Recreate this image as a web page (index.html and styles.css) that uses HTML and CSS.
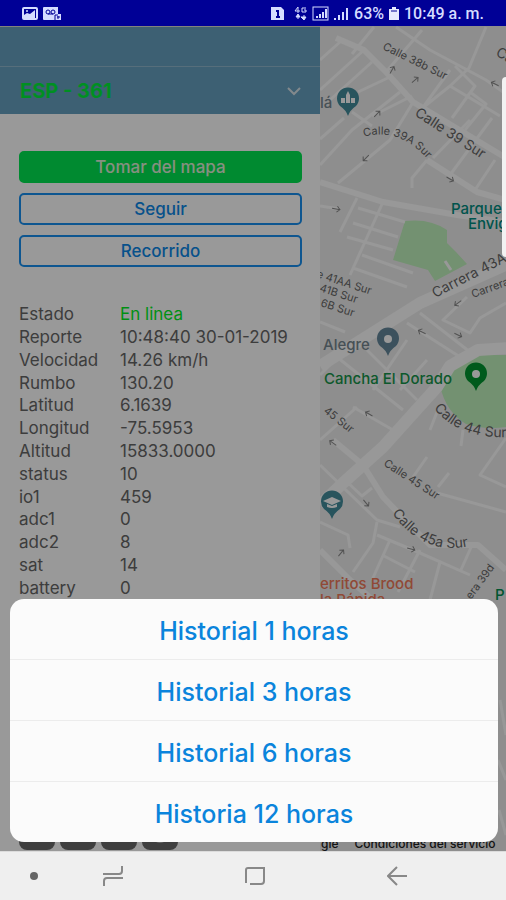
FILE: index.html
```html
<!DOCTYPE html>
<html lang="es">
<head>
  <meta charset="UTF-8">
  <meta name="viewport" content="width=device-width, initial-scale=1.0">
  <title>ESP - 361</title>
  <link rel="stylesheet" href="styles.css">
</head>
<body>

  <header class="status-bar">
    <div class="status-group">
      <svg width="16" height="13" viewBox="0 0 16 13">
        <rect x="1" y="1" width="14" height="11" rx="1" fill="none" stroke="#d5dcff" stroke-width="2"/>
        <path d="M2 11V8l3-2 3 1 5-4v8z" fill="#d5dcff"/>
        <circle cx="5" cy="4" r="1" fill="#d5dcff"/>
      </svg>
      <svg width="18" height="13" viewBox="0 0 18 13">
        <path d="M1 0h14v7h3v6H1q-1 0-1-1V1q0-1 1-1z" fill="#d5dcff"/>
        <g fill="none" stroke="#000096">
          <circle cx="5" cy="5" r="2"/><circle cx="10" cy="5" r="2"/><path d="M5 7h5M12 13V8h3M15 9v3M14 10h3"/>
        </g>
      </svg>
    </div>
    <div class="status-group status-right">
      <svg width="13" height="13" viewBox="0 0 13 13">
        <path d="M0 0h10l3 3v10H0z" fill="#d5dcff"/>
        <path d="M5 4h2v6M5 10h4" fill="none" stroke="#000096" stroke-width="2"/>
      </svg>
      <svg class="icon-4g" width="13" height="15" viewBox="0 0 13 15">
        <path d="M4 7V1L1 5h5M12 2H8v4h4V4h-2" fill="none" stroke="#d5dcff"/>
        <path d="M2 11l2-3 2 3zM7 11h5l-2 3zM4 10v3M10 9v3" fill="#d5dcff" stroke="#d5dcff"/>
      </svg>
      <svg width="17" height="15" viewBox="0 0 17 15">
        <rect x="1" y="1" width="15" height="13" fill="none" stroke="#d5dcff"/>
        <path d="M5 12v-2M8 12V8M11 12V6M14 12V3" stroke="#d5dcff" stroke-width="2"/>
      </svg>
      <svg width="15" height="13" viewBox="0 0 15 13">
        <path d="M1 13v-2M5 13V8M9 13V5M13 13V1" stroke="#d5dcff" stroke-width="2"/>
      </svg>
      <span>63%</span>
      <svg width="10" height="13" viewBox="0 0 10 13">
        <path d="M3 0h4v2h3v11H0V2h3z" fill="#e6eaff"/>
        <path d="M2 4h6" stroke="#000096"/>
      </svg>
      <span>10:49 a. m.</span>
    </div>
  </header>

  <main class="app">
    <section class="panel">
      <div class="panel-top"></div>
      <div class="panel-header">
        <h1>ESP - 361</h1>
        <button class="collapse-btn" aria-label="Cerrar">
          <svg width="16" height="10" viewBox="0 0 16 10"><path d="M2 2l6 6 6-6" fill="none" stroke="#d9e4ea" stroke-width="2"/></svg>
        </button>
      </div>

      <div class="actions">
        <button class="btn btn-fill">Tomar del mapa</button>
        <button class="btn">Seguir</button>
        <button class="btn">Recorrido</button>
      </div>

      <table class="details">
        <tr><th>Estado</th><td class="online">En linea</td></tr>
        <tr><th>Reporte</th><td>10:48:40 30-01-2019</td></tr>
        <tr><th>Velocidad</th><td>14.26 km/h</td></tr>
        <tr><th>Rumbo</th><td>130.20</td></tr>
        <tr><th>Latitud</th><td>6.1639</td></tr>
        <tr><th>Longitud</th><td>-75.5953</td></tr>
        <tr><th>Altitud</th><td>15833.0000</td></tr>
        <tr><th>status</th><td>10</td></tr>
        <tr><th>io1</th><td>459</td></tr>
        <tr><th>adc1</th><td>0</td></tr>
        <tr><th>adc2</th><td>8</td></tr>
        <tr><th>sat</th><td>14</td></tr>
        <tr><th>battery</th><td>0</td></tr>
      </table>

      <div class="tools">
        <span class="tool"></span>
        <span class="tool"></span>
        <span class="tool"></span>
        <span class="tool tool-round"></span>
      </div>
    </section>

    <section class="map">
      <svg class="map-canvas" viewBox="320 26 186 825" preserveAspectRatio="xMinYMin slice">
        <defs>
          <path id="c39a" d="M364 137Q400 126 430 162"/>
          <path id="c44" d="M434 408Q458 440 512 437"/>
          <path id="c45a" d="M392 513Q424 558 474 545"/>
          <g id="arrow"><path d="M-4 0H4M1 -3L4 0L1 3" fill="none" stroke="#888"/></g>
        </defs>

        <!-- parks -->
        <path class="park" d="M405 221Q430 218 447 230V243L456 252L467 264L435 281L428 270L393 260Z"/>
        <path class="park" d="M506 355H480Q455 360 440 386Q446 412 466 424Q484 430 506 427Z"/>

        <!-- streets -->
        <g class="street">
          <path d="M396 27L430 50L486 80L506 94M486 27L469 68L450 86L425 106M352 54L374 27M386 72L422 30M340 42L320 60M320 90L364 50M330 100L372 62M358 92L392 76M372 116L412 96M450 86L500 116M424 106L450 70"/>
          <path d="M455 66L475 86L452 118M470 92L486 104L465 130M400 92L352 130L320 165M412 104L390 140L338 183M352 112L372 126"/>
          <path d="M470 120L433 158M492 118L450 175M495 160L475 190M427 160L412 178V188M320 206L340 209M320 139L344 118"/>
          <path d="M357 198L340 232M383 202L350 275M358 208L405 222M353 223L398 237M347 237L393 250M362 255L413 273M353 268L407 287M445 261L451 270"/>
          <path d="M420 313L470 352M407 323L460 357M467 297L443 320L470 333L480 318L506 303M337 357L403 410M367 350L417 400M407 340L373 390M353 407L393 430M357 407L320 440M427 360L400 390M320 375L345 350M320 322L345 332"/>
          <path d="M437 412L430 430M463 430L461 446M320 465L377 520L400 527M377 522L373 543L353 572M377 535L420 553L470 575M390 540L372 580M420 550L398 592M473 543L460 572M437 493L506 512M506 438L480 475L506 487M427 457L413 477M449 473L438 487M384 556L415 572M440 562L430 600M320 522L348 535L350 548M345 480L362 496L372 488"/>
          <path d="M500 700L506 735M498 760L506 780M499 810L506 835"/>
        </g>
        <g class="street main">
          <path d="M336 38L364 50L386 72L413 102L506 158M320 182L383 202L457 215L506 222M427 160L477 192L506 200"/>
          <path d="M333 440L363 465L383 497L405 520L430 545L478 545L506 570M320 550L350 580L375 602"/>
        </g>
        <g class="street avenue">
          <path d="M512 262L420 303L320 366M512 348L478 350L450 366L437 387L383 447L343 483L320 505"/>
        </g>

        <use href="#arrow" transform="translate(392 70) rotate(-60)"/>
        <use href="#arrow" transform="translate(415 80) rotate(-40)"/>
        <use href="#arrow" transform="translate(377 114) rotate(-45)"/>
        <use href="#arrow" transform="translate(495 84) rotate(205)"/>
        <use href="#arrow" transform="translate(366 158) rotate(135)"/>
        <use href="#arrow" transform="translate(450 179) rotate(30)"/>
        <use href="#arrow" transform="translate(336 209) rotate(10)"/>
        <use href="#arrow" transform="translate(458 303) rotate(145)"/>
        <use href="#arrow" transform="translate(422 332) rotate(205)"/>
        <use href="#arrow" transform="translate(458 335) rotate(25)"/>
        <use href="#arrow" transform="translate(369 414) rotate(210)"/>
        <use href="#arrow" transform="translate(333 443) rotate(215)"/>
        <use href="#arrow" transform="translate(366 503) rotate(50)"/>
        <use href="#arrow" transform="translate(341 553) rotate(-50)"/>
        <use href="#arrow" transform="translate(411 549) rotate(15)"/>

        <!-- street names -->
        <g class="label small">
          <text transform="translate(382 49) rotate(26)">Calle 38b Sur</text>
          <text><textPath href="#c39a">Calle 39A Sur</textPath></text>
          <text transform="translate(316 277) rotate(18)">e 41AA Sur</text>
          <text transform="translate(319 291) rotate(18)">41B Sur</text>
          <text transform="translate(320 306) rotate(18)">6B Sur</text>
          <text transform="translate(473 298) rotate(-20)">Carrera 43</text>
          <text transform="translate(323 412) rotate(38)">45 Sur</text>
          <text transform="translate(383 465) rotate(33)">Calle 45 Sur</text>
          <text transform="translate(471 600) rotate(-54)">era 39d</text>
        </g>
        <g class="label">
          <text transform="translate(414 115) rotate(33)">Calle 39 Sur</text>
          <text transform="translate(495 55) rotate(30)">Calle</text>
          <text transform="translate(435 298) rotate(-27)">Carrera 43A</text>
          <text><textPath href="#c44">Calle 44 Sur</textPath></text>
          <text><textPath href="#c45a">Calle 45a Sur</textPath></text>
        </g>

        <!-- places -->
        <g class="place">
          <text x="320" y="108" fill="#75868f">lá</text>
          <text x="323" y="350" fill="#75868f">Alegre</text>
          <text x="451" y="214" fill="#008c80">Parque</text>
          <text x="468" y="229" fill="#008c80">Envigado</text>
          <text x="324" y="384" fill="#16944a">Cancha El Dorado</text>
          <text x="320" y="589" fill="#f07a5a">erritos Brood</text>
          <text x="320" y="605" fill="#f07a5a">la Rápida</text>
          <text x="495" y="600" fill="#008f50">P</text>
        </g>

        <g fill="#438c9c">
          <path d="M348 116Q346 110 340 106A11 11 0 1 1 356 106Q350 110 348 116Z"/>
          <path d="M332 519Q330 513 324 509A11 11 0 1 1 340 509Q334 513 332 519Z"/>
        </g>
        <path fill="#fff" d="M341 103V98h4v5zM351 103V98h4v5zM346 103v-8l2-4 2 4v8z"/>
        <path fill="#fff" d="M323 501l9-4 9 4-9 4zM327 504l5 2 5-2v3q-5 2-10 0z"/>
        <path fill="#64889c" d="M388 356Q386 350 380 346A11 11 0 1 1 396 346Q390 350 388 356Z"/>
        <path fill="#009630" d="M476 391Q474 385 468 381A11 11 0 1 1 484 381Q478 385 476 391Z"/>
        <circle cx="388" cy="339" r="4" fill="#fff"/>
        <circle cx="476" cy="374" r="4" fill="#fff"/>
      </svg>
      <p class="map-terms"><span>gle</span><a href="#">Condiciones del servicio</a></p>
    </section>

    <div class="backdrop">
      <div class="sheet">
        <button>Historial 1 horas</button>
        <button>Historial 3 horas</button>
        <button>Historial 6 horas</button>
        <button>Historia 12 horas</button>
      </div>
    </div>
    <div class="edge-handle"></div>
  </main>

  <nav class="nav-bar">
    <button class="nav-dot" aria-label="Ocultar">
      <svg width="8" height="8" viewBox="0 0 8 8"><circle cx="4" cy="4" r="4" fill="#666"/></svg>
    </button>
    <button aria-label="Recientes">
      <svg width="20" height="20" viewBox="0 0 20 20"><path d="M0 8h16q3 0 3-3V0M20 12H4q-3 0-3 3v5" fill="none" stroke="#888" stroke-width="2"/></svg>
    </button>
    <button aria-label="Inicio">
      <svg width="20" height="20" viewBox="0 0 20 20"><path d="M1 17V4q0-2 2-2h16v13q0 3-3 3H5" fill="none" stroke="#888" stroke-width="2"/></svg>
    </button>
    <button aria-label="Volver">
      <svg width="20" height="20" viewBox="0 0 20 20"><path d="M20 10H1M10 1L1 10l9 9" fill="none" stroke="#888" stroke-width="2"/></svg>
    </button>
  </nav>

</body>
</html>
```
FILE: styles.css
```css
* {
  box-sizing: border-box;
}

body {
  margin: 0;
  height: 100vh;
  display: flex;
  flex-direction: column;
  font-family: Inter, Roboto, sans-serif;
  font-size: 17px;
  background-color: #fff;
}

button {
  font-family: inherit;
  padding: 0;
  border: none;
  background: none;
  cursor: pointer;
}

svg {
  display: block;
}

.status-bar {
  height: 26px;
  flex: none;
  padding: 0 22px;
  display: flex;
  justify-content: space-between;
  align-items: center;
  background-color: #000096;
  color: #d5dcff;
  font-family: Roboto, sans-serif;
  font-size: 16px;
  font-weight: 500;
}

.status-group {
  display: flex;
  align-items: center;
  gap: 5px;
}

.status-right .icon-4g {
  margin-left: 5px;
}

.app {
  position: relative;
  flex: 1;
  min-height: 0;
  display: flex;
  overflow: hidden;
}

.panel {
  width: 320px;
  flex: none;
  display: flex;
  flex-direction: column;
  background-color: #fff;
  overflow: hidden;
}

.panel-top {
  height: 41px;
  flex: none;
  background-color: #66a0c0;
  border-top: 1px solid #d8dccf;
  border-bottom: 1px solid #8fb8ce;
}

.panel-header {
  height: 47px;
  flex: none;
  padding: 0 18px 0 20px;
  display: flex;
  justify-content: space-between;
  align-items: center;
  background-color: #66a0c0;
}

.panel-header h1 {
  margin: 0;
  font-size: 20px;
  color: #00ee3a;
}

.actions {
  padding: 37px 18px 0 19px;
  display: flex;
  flex-direction: column;
  gap: 10px;
}

.btn {
  height: 32px;
  border: 2px solid #1890f0;
  border-radius: 5px;
  font-size: 17px;
  font-weight: 500;
  color: #0c88e8;
}

.btn-fill {
  background-color: #00e650;
  border-color: #00e650;
  color: #e0f0d8;
}

.details {
  height: 296px;
  margin: 36px 19px 0;
  border-collapse: collapse;
  line-height: 22px;
  color: #666;
}

.details th {
  width: 101px;
  padding: 0;
  font-weight: 400;
  text-align: left;
}

.details td {
  padding: 0;
}

.details .online {
  color: #00f01e;
}

.tools {
  margin-top: auto;
  padding: 0 19px 1px;
  display: flex;
  gap: 5px;
}

.tool {
  width: 36px;
  height: 36px;
  border-radius: 8px;
  background-color: #6a6a6a;
}

.tool-round {
  background: radial-gradient(circle at 50% 40%, #b0b0b0 50%, #6a6a6a 52%);
}

.map {
  position: relative;
  flex: 1;
  min-width: 0;
  background-color: #ededed;
}

.map-canvas {
  width: 100%;
  height: 100%;
}

.street {
  fill: none;
  stroke: #fdfdfd;
  stroke-width: 3;
  stroke-linejoin: round;
}

.main {
  stroke-width: 6;
}

.avenue {
  stroke-width: 12;
}

.park {
  fill: #c0f2bc;
}

.label {
  font-size: 14px;
  fill: #666;
}

.small {
  font-size: 11px;
}

.place {
  font-size: 15px;
  font-weight: 500;
}

.map-terms {
  position: absolute;
  left: 1px;
  bottom: 0;
  margin: 0;
  display: flex;
  gap: 16px;
  font-size: 12px;
  font-weight: 500;
  line-height: 14px;
  white-space: nowrap;
  color: #222;
}

.map-terms a {
  color: inherit;
  text-decoration: none;
}

.backdrop {
  position: absolute;
  inset: 0;
  padding: 0 8px 9px 10px;
  display: flex;
  align-items: flex-end;
  background-color: rgba(0, 0, 0, 0.4);
}

.sheet {
  flex: 1;
  display: flex;
  flex-direction: column;
  border-radius: 14px;
  background-color: #fbfbfb;
  overflow: hidden;
}

.sheet button {
  height: 61px;
  padding-top: 4px;
  font-size: 25px;
  font-weight: 500;
  color: #0a84dc;
  border-bottom: 1px solid #ececec;
}

.sheet button:last-child {
  height: 60px;
  border-bottom: none;
}

.edge-handle {
  position: absolute;
  top: 51px;
  right: 0;
  width: 4px;
  height: 180px;
  border-radius: 4px 0 0 4px;
  background-color: #f2f2f2;
}

.nav-bar {
  height: 49px;
  flex: none;
  padding: 0 38px 0 30px;
  display: grid;
  grid-template-columns: 12px 1fr 1fr 1fr;
  align-items: center;
  background-color: #efefef;
  border-top: 1px solid #dcdcdc;
}

.nav-bar button {
  display: flex;
  justify-content: center;
}

.nav-bar .nav-dot {
  justify-content: flex-start;
}
```
